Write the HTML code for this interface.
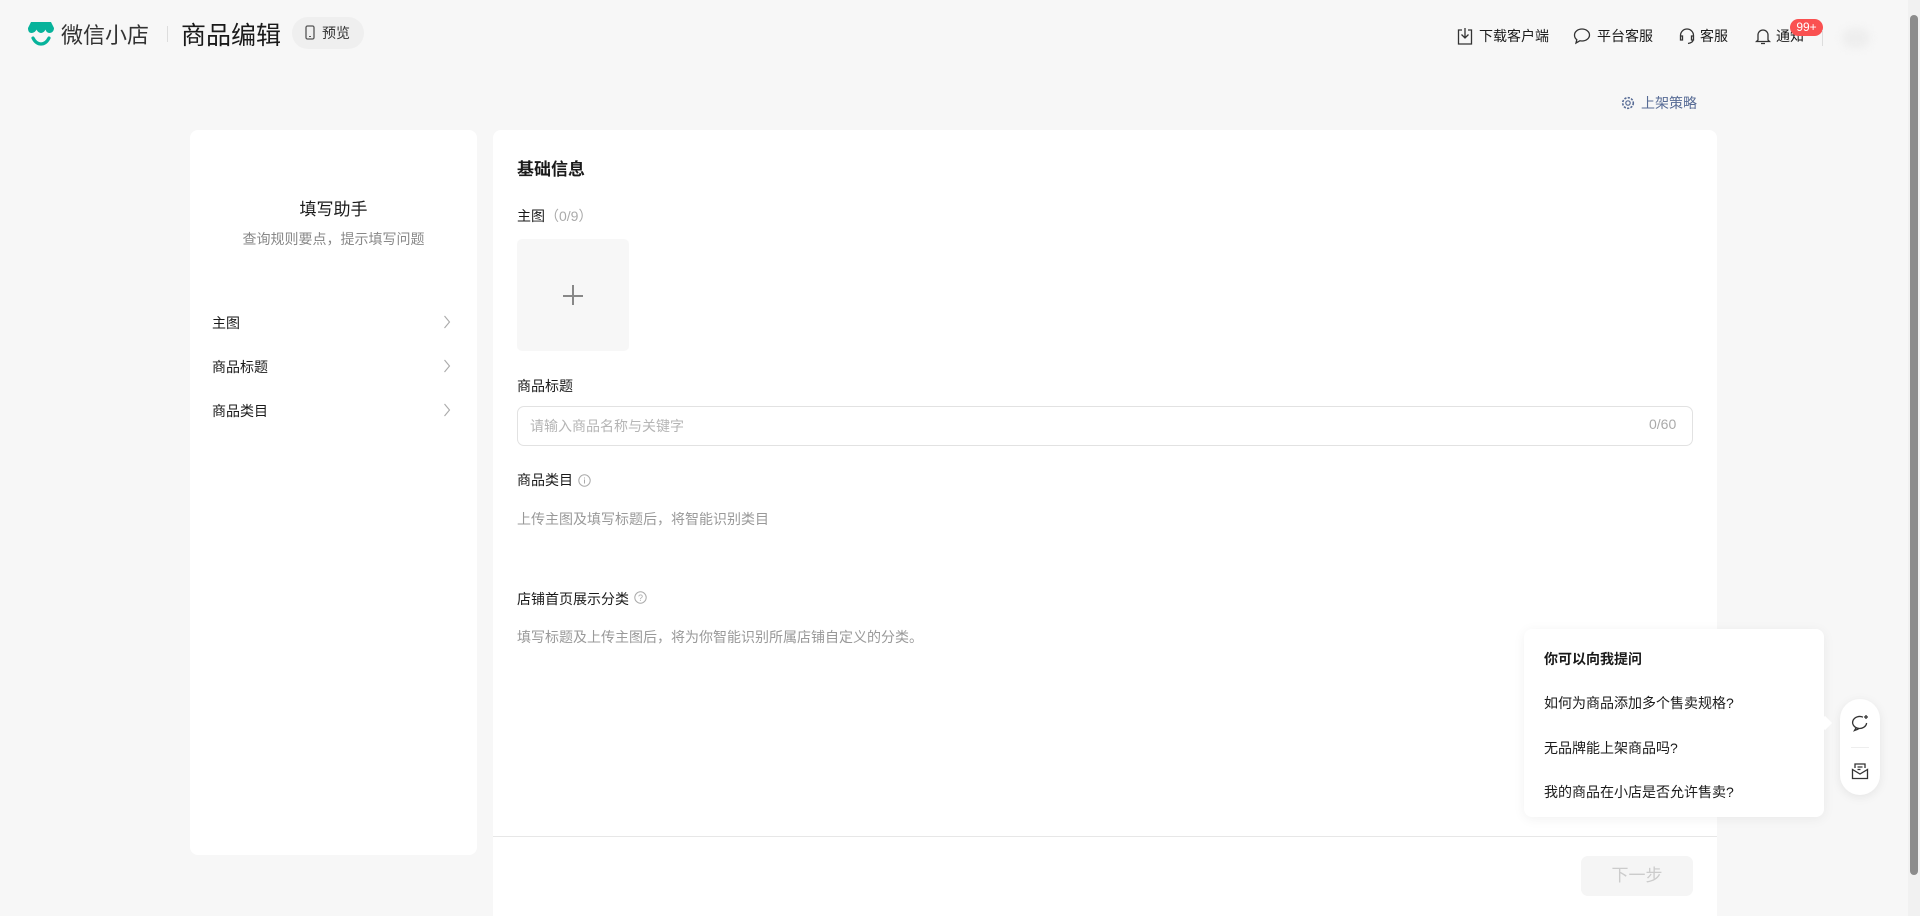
<!DOCTYPE html>
<html><head><meta charset="utf-8"><style>
*{margin:0;padding:0;box-sizing:border-box}
body{width:1920px;height:916px;background:#f7f7f7;font-family:"Liberation Sans","Noto Sans CJK SC",sans-serif;color:#1a1a1a;position:relative;overflow:hidden;font-size:14px}
.a{position:absolute;white-space:nowrap}
.nav{font-size:14px;color:#1a1a1a;top:27px;line-height:18px}
.card{position:absolute;background:#fff;border-radius:8px}
.g{color:#999}
</style></head><body>
<svg class="a" style="left:27px;top:20px" width="28" height="27" viewBox="0 0 28 27"><path d="M4 2h20l3 6c0 3-2 5-4.5 5S19 11 18.5 9.5C18 11 16 13 14 13s-4-2-4.5-3.5C9 11 7 13 4.5 13S1 11 1 8z" fill="#07b39b"/><path d="M6 18c2 4 5 6 8 6s6-2 8-6" stroke="#07b39b" stroke-width="3.2" fill="none" stroke-linecap="round"/></svg>
<div class="a" style="left:61px;top:18px;font-size:22px;color:#333">微信小店</div>
<div class="a" style="left:167px;top:26px;width:1px;height:16px;background:#ddd"></div>
<div class="a" style="left:181px;top:16px;font-size:25px;color:#1a1a1a">商品编辑</div>
<div class="a" style="left:292px;top:17px;width:72px;height:32px;border-radius:16px;background:#efefef"></div>
<svg class="a" style="left:305px;top:25px" width="10" height="15" viewBox="0 0 10 15"><rect x="1" y="1" width="8" height="13" rx="1.5" fill="none" stroke="#555" stroke-width="1.3"/><path d="M4 11.5h2" stroke="#555"/></svg>
<div class="a" style="left:322px;top:23px;font-size:14px;color:#333">预览</div>

<svg class="a" style="left:1457px;top:27px" width="16" height="18" viewBox="0 0 16 18"><path d="M5 3H1.5v14h13V3H11M8 1v10M4.5 7.5 8 11l3.5-3.5" fill="none" stroke="#333" stroke-width="1.3"/></svg>
<div class="a nav" style="left:1479px">下载客户端</div>
<svg class="a" style="left:1573px;top:27px" width="18" height="18" viewBox="0 0 18 18"><path d="M9 2c4 0 7.5 2.6 7.5 6S13 14 9 14c-.8 0-1.5 0-2.2-.2L3 16l.8-3.3C2.3 11.6 1.5 10 1.5 8 1.5 4.6 5 2 9 2z" fill="none" stroke="#333" stroke-width="1.3"/></svg>
<div class="a nav" style="left:1597px">平台客服</div>
<svg class="a" style="left:1678px;top:27px" width="18" height="18" viewBox="0 0 18 18"><path d="M2.5 11V8.5a6.5 6.5 0 0 1 13 0V11M2.5 9h2v4h-2zM13.5 9h2v4h-2zM15 13c0 2-2 3-5 3.5" fill="none" stroke="#333" stroke-width="1.3"/></svg>
<div class="a nav" style="left:1700px">客服</div>
<svg class="a" style="left:1755px;top:27px" width="16" height="18" viewBox="0 0 16 18"><path d="M3 13V8a5 5 0 0 1 10 0v5l1.5 1.5h-13zM6 16.5h4" fill="none" stroke="#333" stroke-width="1.3"/></svg>
<div class="a nav" style="left:1776px">通知</div>
<div class="a" style="left:1790px;top:19px;width:33px;height:17px;border-radius:9px;background:#fa5151;color:#fff;font-size:12px;line-height:17px;text-align:center">99+</div>
<div class="a" style="left:1822px;top:30px;width:1px;height:16px;background:#ddd"></div>
<div class="a" style="left:1842px;top:28px;width:28px;height:20px;border-radius:10px;background:#eee;filter:blur(4px)"></div>
<div class="a" style="left:1908px;top:0;width:12px;height:916px;background:#f1f1f1"></div>
<div class="a" style="left:1910px;top:15px;width:8px;height:860px;border-radius:4px;background:#8c8c8c"></div>

<svg class="a" style="left:1621px;top:96px" width="14" height="14" viewBox="0 0 14 14"><circle cx="7" cy="7" r="2.2" fill="none" stroke="#576b95" stroke-width="1.2"/><circle cx="7" cy="7" r="5.3" fill="none" stroke="#576b95" stroke-width="1.6" stroke-dasharray="2.2 1.3"/></svg>
<div class="a" style="left:1641px;top:93px;font-size:14px;color:#576b95">上架策略</div>

<div class="card" style="left:190px;top:130px;width:287px;height:725px"></div>
<div class="a" style="left:190px;width:287px;top:195px;text-align:center;font-size:17px;color:#1a1a1a">填写助手</div>
<div class="a" style="left:190px;width:287px;top:229px;text-align:center;font-size:14px;color:#888">查询规则要点，提示填写问题</div>
<div class="a" style="left:212px;top:313px">主图</div>
<div class="a" style="left:212px;top:357px">商品标题</div>
<div class="a" style="left:212px;top:401px">商品类目</div>
<svg class="a" style="left:443px;top:315px" width="8" height="110" viewBox="0 0 8 110"><path d="M1.5 1l5 6-5 6M1.5 45l5 6-5 6M1.5 89l5 6-5 6" fill="none" stroke="#aaa" stroke-width="1.1"/></svg>

<div class="card" style="left:493px;top:130px;width:1224px;height:706px;border-radius:8px 8px 0 0"></div>
<div class="a" style="left:493px;top:837px;width:1224px;height:79px;background:#fff"></div>
<div class="a" style="left:493px;top:836px;width:1224px;height:1px;background:#e7e7e7"></div>
<div class="a" style="left:517px;top:155px;font-size:17px;font-weight:bold">基础信息</div>
<div class="a" style="left:517px;top:206px">主图<span style="color:#aaa">（0/9）</span></div>
<div class="a" style="left:517px;top:239px;width:112px;height:112px;border-radius:5px;background:#f7f7f7"></div>
<div class="a" style="left:563px;top:295px;width:20px;height:1.5px;background:#888"></div>
<div class="a" style="left:572px;top:285px;width:1.5px;height:20px;background:#888"></div>
<div class="a" style="left:517px;top:376px">商品标题</div>
<div class="a" style="left:517px;top:406px;width:1176px;height:40px;border:1px solid #e2e2e2;border-radius:7px"></div>
<div class="a" style="left:530px;top:416px;color:#b5b5b5">请输入商品名称与关键字</div>
<div class="a" style="left:1649px;top:416px;color:#aaa">0/60</div>
<div class="a" style="left:517px;top:470px">商品类目</div>
<svg class="a" style="left:578px;top:474px" width="13" height="13" viewBox="0 0 13 13"><circle cx="6.5" cy="6.5" r="5.7" fill="none" stroke="#aaa"/><path d="M6.5 5.5v4M6.5 3.5v1" stroke="#aaa"/></svg>
<div class="a g" style="left:517px;top:509px">上传主图及填写标题后，将智能识别类目</div>
<div class="a" style="left:517px;top:589px">店铺首页展示分类</div>
<svg class="a" style="left:634px;top:591px" width="13" height="13" viewBox="0 0 13 13"><circle cx="6.5" cy="6.5" r="5.7" fill="none" stroke="#aaa"/><text x="6.5" y="10" font-size="9" fill="#aaa" text-anchor="middle" font-family="Liberation Sans">?</text></svg>
<div class="a g" style="left:517px;top:627px">填写标题及上传主图后，将为你智能识别所属店铺自定义的分类。</div>
<div class="a" style="left:1581px;top:856px;width:112px;height:40px;border-radius:7px;background:#f5f5f5;color:#ccc;font-size:17px;line-height:40px;text-align:center">下一步</div>

<div class="a" style="left:1524px;top:629px;width:300px;height:188px;background:#fff;border-radius:8px;box-shadow:0 2px 12px rgba(0,0,0,.06)"></div>
<div class="a" style="left:1544px;top:649px;font-weight:bold">你可以向我提问</div>
<div class="a" style="left:1544px;top:693px">如何为商品添加多个售卖规格?</div>
<div class="a" style="left:1544px;top:738px">无品牌能上架商品吗?</div>
<div class="a" style="left:1544px;top:782px">我的商品在小店是否允许售卖?</div>
<div class="a" style="left:1820px;top:718px;width:10px;height:10px;background:#fff;transform:rotate(45deg)"></div>
<div class="a" style="left:1840px;top:699px;width:40px;height:96px;border-radius:20px;background:#fff;box-shadow:0 2px 10px rgba(0,0,0,.08)"></div>
<svg class="a" style="left:1851px;top:714px" width="18" height="18" viewBox="0 0 18 18"><path d="M12 3.2A7 6 0 1 0 15.6 9M5 14l-1.5 2.5 4-1.5" fill="none" stroke="#333" stroke-width="1.3"/><path d="M15 1v4M13 3h4" stroke="#333" stroke-width="1.3"/></svg>
<div class="a" style="left:1851px;top:747px;width:18px;height:1px;background:#eee"></div>
<svg class="a" style="left:1851px;top:762px" width="18" height="18" viewBox="0 0 18 18"><path d="M1.5 7.5v9h15v-9L9 12z M4 6V2h10v4M6.5 5h5M6.5 7.5h3" fill="none" stroke="#333" stroke-width="1.3"/></svg>
</body></html>
